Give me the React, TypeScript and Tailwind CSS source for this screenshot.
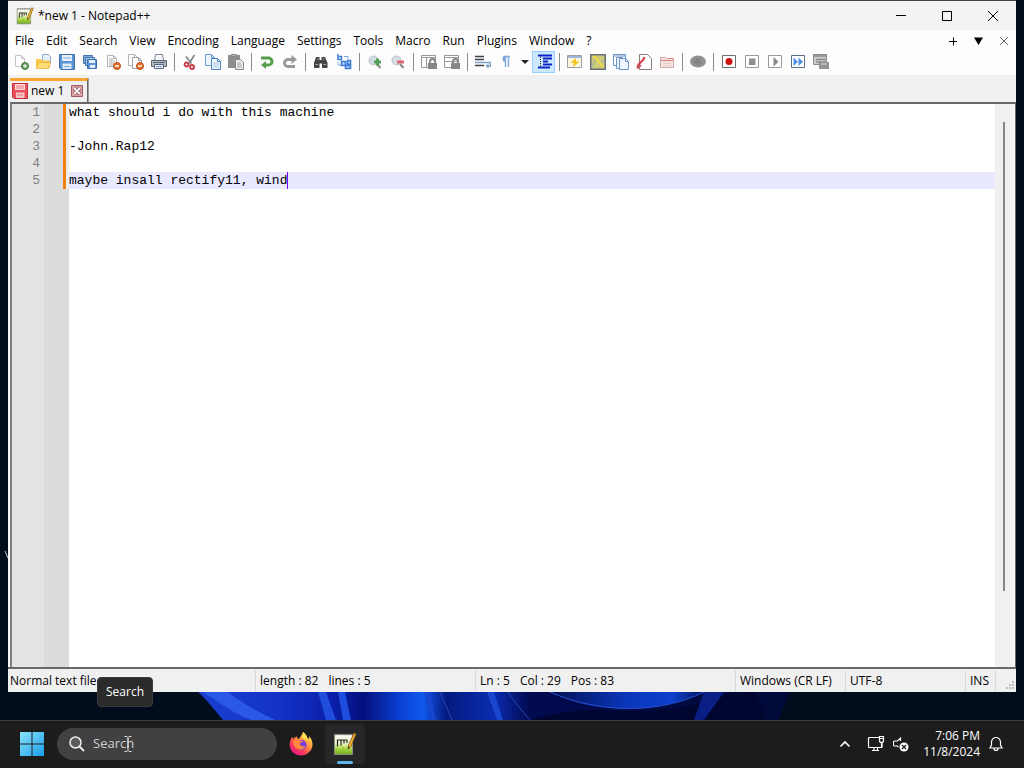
import { useState } from "react";
import type { ReactNode } from "react";
import clsx from "clsx";

const MENUS = [
  "File", "Edit", "Search", "View", "Encoding", "Language", "Settings",
  "Tools", "Macro", "Run", "Plugins", "Window", "?",
];

const INITIAL_TEXT = `what should i do with this machine

-John.Rap12

maybe insall rectify11, wind`;

function Icon({ children }: { children: ReactNode }) {
  return (
    <svg viewBox="0 0 16 16" className="h-4 w-4 shrink-0" fill="none" aria-hidden="true">
      {children}
    </svg>
  );
}

function Page({ x = 0, y = 0, color = "#a8a8a8", fill = "#fff" }) {
  return (
    <path
      d={`M${x + 0.5} ${y + 0.5}h6l3 3v8h-9z M${x + 6.5} ${y + 0.5}v3h3`}
      stroke={color}
      fill={fill}
    />
  );
}

function CloseBadge() {
  return (
    <>
      <circle cx="12" cy="12" r="3.5" fill="#e2702c" stroke="#b9501a" />
      <path d="M10 12h4" stroke="#fff" strokeWidth="1.4" />
    </>
  );
}

function Lens({ color, plus }: { color: string; plus?: boolean }) {
  return (
    <Icon>
      <path d="M10 10l3.500 4" stroke="#888" strokeWidth="2" />
      <circle cx="6.5" cy="6.5" r="4.500" fill="#d3dde2" stroke="#b4c2ca" />
      <path d={plus ? "M7 8h7M10.500 4.500v7" : "M7 8h7"} stroke={color} strokeWidth="3" />
    </Icon>
  );
}

function LockedPane({ split }: { split?: boolean }) {
  return (
    <Icon>
      <path d="M.5 1.500h14v12H.5zM.5 3.500h14" stroke="#999" />
      {split ? <path d="M5.500 4v9" stroke="#999" /> : <path d="M1 7.500h12" stroke="#999" />}
      <path d="M7 9h9v6H7z" fill="#868686" />
      <path d="M9 9V7.500a2.500 2.500 0 0 1 5 0V9" stroke="#868686" strokeWidth="1.800" />
    </Icon>
  );
}

type Tool = { label: string; icon: ReactNode; active?: boolean; drop?: boolean };

const TOOL_GROUPS: Tool[][] = [
  [
    {
      label: "New",
      icon: (
        <Icon>
          <Page x={2} y={1} color="#c4c4c4" />
          <circle cx="12" cy="12" r="3.500" fill="#6d9b5a" stroke="#487a3a" />
          <path d="M10 12h4M12 10v4" stroke="#fff" />
        </Icon>
      ),
    },
    {
      label: "Open",
      icon: (
        <Icon>
          <path d="M6.500.5h6l2 2v7h-8z" fill="#e4effa" stroke="#88a9cc" />
          <path d="M0 5h5l1 1.500h8V14H0z" fill="#f7c84a" />
          <path d="M.5 14.500l2-6h12l-2 6z" fill="#fddc77" stroke="#e5a92c" strokeWidth=".7" />
        </Icon>
      ),
    },
    {
      label: "Save",
      icon: (
        <Icon>
          <path d="M.5.5h15v15H2L.5 14z" fill="#5c94d3" stroke="#3a70ae" />
          <path d="M3 1h10v6H3z" fill="#e8f1fb" />
          <path d="M3.500 9.500h9V15h-9z" fill="#dfeafb" />
          <path d="M4 4h8M5 12.500h6" stroke="#7faadc" />
        </Icon>
      ),
    },
    {
      label: "Save All",
      icon: (
        <Icon>
          <path d="M1.500 1.500h9v8h-9z" fill="#7fabe0" stroke="#4676b0" />
          <path d="M3.500 3.500h9v8h-9z" fill="#a9c8ec" stroke="#4676b0" />
          <path d="M5.500 5.500h9v9h-9z" fill="#5c94d3" stroke="#3a70ae" />
          <path d="M7 6h6v3H7zM8 11h5v3H8z" fill="#e8f1fb" />
        </Icon>
      ),
    },
    {
      label: "Close",
      icon: (
        <Icon>
          <Page x={2} y={1} color="#b4b4b4" />
          <path d="M4 5h4M4 7h6M4 9h5M4 11h4" stroke="#aaa" />
          <CloseBadge />
        </Icon>
      ),
    },
    {
      label: "Close All",
      icon: (
        <Icon>
          <Page x={0} y={0} color="#b4b4b4" />
          <Page x={4} y={3} color="#a0a0a0" />
          <CloseBadge />
        </Icon>
      ),
    },
    {
      label: "Print",
      icon: (
        <Icon>
          <path d="M4.500.5h7l1 6h-9z" fill="#f3f7fd" stroke="#7a8797" />
          <path d="M.5 6.500h15v6H.5z" fill="#b4bbc4" stroke="#59636f" />
          <path d="M3.500 10.500h9v4h-9z" fill="#e8f1fb" stroke="#59636f" />
          <path d="M5 12.500h6" stroke="#6ea0d8" />
          <path d="M2 8.500h12" stroke="#5a6470" />
        </Icon>
      ),
    },
  ],
  [
    {
      label: "Cut",
      icon: (
        <Icon>
          <path d="M7 9.500L12.500 1M9.500 9.500L4 2.500" stroke="#7e8287" strokeWidth="1.600" />
          <circle cx="4.500" cy="10.500" r="2" stroke="#c63946" strokeWidth="1.800" />
          <circle cx="10" cy="13" r="2" stroke="#c63946" strokeWidth="1.800" />
        </Icon>
      ),
    },
    {
      label: "Copy",
      icon: (
        <Icon>
          <Page x={0} y={0} color="#6b9bd1" fill="#eff6ff" />
          <Page x={6} y={4} color="#4d84c4" fill="#eff6ff" />
          <path d="M8 9h6M8 11h6M8 13h6" stroke="#a9c7e8" />
        </Icon>
      ),
    },
    {
      label: "Paste",
      icon: (
        <Icon>
          <path d="M0 1h12v13H0z" fill="#8e8e8e" />
          <path d="M3.500.5h5v2h-5z" fill="#b5b5b5" stroke="#888" />
          <path d="M7.500 5.500h5l3 3v7h-8z" fill="#eee" stroke="#888" />
          <path d="M9 9h4M9 11h5M9 13h5" stroke="#aaa" />
        </Icon>
      ),
    },
  ],
  [
    {
      label: "Undo",
      icon: (
        <Icon>
          <path d="M2 4h7.500a3.500 3.500 0 0 1 0 7H6" stroke="#56a04c" strokeWidth="3" />
          <path d="M7 7v8l-5-4z" fill="#56a04c" />
        </Icon>
      ),
    },
    {
      label: "Redo",
      icon: (
        <Icon>
          <path d="M13 12.500H6a3.500 3.500 0 0 1 0-7h5" stroke="#999" strokeWidth="3" />
          <path d="M9.500 1v9l5.500-4.500z" fill="#999" />
        </Icon>
      ),
    },
  ],
  [
    {
      label: "Find",
      icon: (
        <Icon>
          <path d="M3 3h3.500v3h2V3H12l2.500 6v5H9V9.500H6.500V14H1V9z" fill="#444" />
          <path d="M2.500 10.500h2.500M10.500 10.500H13M4 5h1.500M10 5h1.500" stroke="#aaa" />
        </Icon>
      ),
    },
    {
      label: "Replace",
      icon: (
        <Icon>
          <path d="M2 0v6M2 5.500h3.500v-3H2" stroke="#3c7bd8" strokeWidth="1.500" />
          <path d="M5.500 7.500h4v4h-4zM11.500 6.500h3v4h-3zM9.500 11.500h5v3h-5z" fill="#b6d3f7" stroke="#3c7bd8" strokeWidth="1.600" />
          <path d="M2 8v3h3M8 2.500h4v3" stroke="#7ba8e4" />
        </Icon>
      ),
    },
  ],
  [
    { label: "Zoom In", icon: <Lens color="#58a05a" plus /> },
    { label: "Zoom Out", icon: <Lens color="#dc6a70" /> },
  ],
  [
    { label: "Synchronize Vertical Scrolling", icon: <LockedPane split /> },
    { label: "Synchronize Horizontal Scrolling", icon: <LockedPane /> },
  ],
  [
    {
      label: "Word wrap",
      icon: (
        <Icon>
          <path d="M0 2.500h9M0 5.500h9M0 11.500h9" stroke="#39414d" strokeWidth="1.300" />
          <path d="M0 8.500h15.500v3.500H12" stroke="#7d9fc9" strokeWidth="1.300" />
          <path d="M13.500 9.500v5l-3-2.500z" fill="#7d9fc9" />
        </Icon>
      ),
    },
    {
      label: "Show All Characters",
      drop: true,
      icon: (
        <Icon>
          <path d="M7.500 2v11M10.500 2v11M5 2.500h7" stroke="#7fa9dc" strokeWidth="1.400" />
          <path d="M7.500 2v6a3 3 0 0 1 0-6z" fill="#7fa9dc" />
        </Icon>
      ),
    },
    {
      label: "Show Indent Guide",
      active: true,
      icon: (
        <Icon>
          <path d="M2 1.500h14M7 4.500h9M7 7.500h5M7 10.500h9M2 13.500h12" stroke="#0c24c4" strokeWidth="2" />
          <path d="M4.500 3v10" stroke="#333" strokeDasharray="1 1" />
        </Icon>
      ),
    },
  ],
  [
    {
      label: "Define your language",
      icon: (
        <Icon>
          <path d="M.5 1.500h14v12H.5z" fill="#fbf6dd" stroke="#9a9fa8" />
          <path d="M1 3h13" stroke="#9db7d8" strokeWidth="2" />
          <path d="M9 4L3.500 9H7l-1 4 6.500-5.500H9z" fill="#f6c21c" />
        </Icon>
      ),
    },
    {
      label: "Document Map",
      icon: (
        <Icon>
          <path d="M.75.75h14.500v14.500H.75z" fill="#cfcc78" stroke="#65707b" strokeWidth="1.500" />
          <path d="M2 13l4-9 4 6 4-4" stroke="#9ab5a5" strokeWidth="1.200" />
          <path d="M4 2l9 11" stroke="#efdc48" strokeWidth="2" />
        </Icon>
      ),
    },
    {
      label: "Document List",
      icon: (
        <Icon>
          <path d="M.5.5h12v11H.5z" fill="#fff" stroke="#6c95c5" />
          <path d="M1 2h11" stroke="#6c95c5" />
          <Page x={3} y={3} color="#6c95c5" fill="#eff6ff" />
          <Page x={6} y={4} color="#6c95c5" fill="#eff6ff" />
        </Icon>
      ),
    },
    {
      label: "Function List",
      icon: (
        <Icon>
          <path d="M3.500.5h8l4 4v11h-12z" fill="#fff" stroke="#8c7a7a" />
          <path d="M1.500 14.500l1-4 5-5 1-2.500M2 11l3 1" stroke="#d5434f" strokeWidth="2.200" />
        </Icon>
      ),
    },
    {
      label: "Folder as Workspace",
      icon: (
        <Icon>
          <path d="M1.500 3.500h5l1 1h7v9h-13z" fill="#f6e4e1" stroke="#cfaaa6" />
          <path d="M2 6.500h12M9 4.500h5" stroke="#d8827f" />
          <path d="M4 9.500h8M4 11.500h8" stroke="#ecccc9" />
        </Icon>
      ),
    },
  ],
  [
    {
      label: "Monitoring",
      icon: (
        <Icon>
          <ellipse cx="8" cy="7.500" rx="8" ry="6" fill="#929292" />
          <circle cx="8" cy="7.500" r="3.500" fill="#848484" />
        </Icon>
      ),
    },
  ],
  [
    {
      label: "Start Recording",
      icon: (
        <Icon>
          <path d="M1.500 1.500h13v12h-13z" fill="#fff" stroke="#6e6e6e" />
          <circle cx="8" cy="7.500" r="3.500" fill="#cc1111" />
        </Icon>
      ),
    },
    {
      label: "Stop Recording",
      icon: (
        <Icon>
          <path d="M1.500 1.500h13v12h-13z" fill="#fff" stroke="#999" />
          <path d="M5 4.500h6.500V11H5z" fill="#8e8e8e" />
        </Icon>
      ),
    },
    {
      label: "Playback",
      icon: (
        <Icon>
          <path d="M1.500 1.500h13v12h-13z" fill="#fff" stroke="#999" />
          <path d="M6.500 3v9.500l5-4.750z" fill="#8a8a8a" />
        </Icon>
      ),
    },
    {
      label: "Run a Macro Multiple Times",
      icon: (
        <Icon>
          <path d="M1.500 1.500h13v12h-13z" fill="#fff" stroke="#5d6f88" />
          <path d="M3.500 3.500v8.500L8 7.750zM8.500 3.500v8.500L13 7.750z" fill="#4b8fe3" />
        </Icon>
      ),
    },
    {
      label: "Save Current Recorded Macro",
      icon: (
        <Icon>
          <path d="M.5.5h13v10H.5z" fill="#ccc" stroke="#8c8c8c" />
          <path d="M1 2h12M3 5.500h10M3 8h10" stroke="#8c8c8c" strokeWidth="1.500" />
          <path d="M6 8h10v7H6z" fill="#929292" />
          <path d="M8 10h6" stroke="#ddd" />
        </Icon>
      ),
    },
  ],
];

function NotepadLogo({ className }: { className: string }) {
  return (
    <svg viewBox="0 0 24 24" className={className} fill="none" aria-hidden="true">
      <defs>
        <linearGradient id="leaf" x1="0" y1="0" x2="0" y2="1">
          <stop offset="0" stopColor="#fbfdf5" />
          <stop offset="0.450" stopColor="#eaf4c8" />
          <stop offset="0.700" stopColor="#b2da4a" />
          <stop offset="1" stopColor="#6aa81c" />
        </linearGradient>
      </defs>
      <path d="M1.500 2.500h18v20h-18z" fill="url(#leaf)" stroke="#8a917f" />
      <path d="M2 2.500h17" stroke="#777" strokeWidth="1.500" strokeDasharray="1.500 1.500" />
      <path d="M4.500 7.500v7M8 7.500v6M11 8.500v3M14 8.500v2.500M4.500 8h10" stroke="#222" strokeWidth="1.200" />
      <path d="M4 21v-5M7 21v-4M10 21v-6M13 21v-4M16 21v-5" stroke="#8cc22e" />
      <path d="M23 2l-2-1-5.500 12-.5 4 3-2.500z" fill="#f0b429" stroke="#7d4f24" strokeWidth=".8" />
      <path d="M15 17l.5-2.500 1.500 1z" fill="#222" />
    </svg>
  );
}

function TitleBar() {
  return (
    <header className="flex h-[29px] shrink-0 items-center bg-[#f3f3f3] pl-2">
      <NotepadLogo className="h-[18px] w-[18px]" />
      <h1 className="ml-1 flex-1 text-[12px] text-black">*new 1 - Notepad++</h1>
      <button aria-label="Minimize" className="grid h-full w-[46px] place-items-center">
        <svg viewBox="0 0 10 10" className="h-2.5 w-2.5"><path d="M0 4.500h10" stroke="#000" /></svg>
      </button>
      <button aria-label="Maximize" className="grid h-full w-[46px] place-items-center">
        <svg viewBox="0 0 10 10" className="h-2.5 w-2.5" fill="none"><path d="M.5.5h9v9h-9z" stroke="#000" /></svg>
      </button>
      <button aria-label="Close" className="grid h-full w-[46px] place-items-center">
        <svg viewBox="0 0 10 10" className="h-2.5 w-2.5"><path d="M0 0l10 10M10 0L0 10" stroke="#000" /></svg>
      </button>
    </header>
  );
}

function MenuBar() {
  return (
    <nav className="flex h-[21px] shrink-0 items-center justify-between bg-[#fdfdfd] pl-px">
      <div className="flex h-full items-end">
        {MENUS.map((menu) => (
          <button key={menu} className="px-1.5 text-[12px] leading-5 text-black">
            {menu}
          </button>
        ))}
      </div>
      <div className="flex h-full items-center gap-4 pr-[7px]">
        <button aria-label="New tab">
          <svg viewBox="0 0 10 10" className="h-2.5 w-2.5"><path d="M2 5.500h8M6.500 1.500v8" stroke="#000" /></svg>
        </button>
        <button aria-label="Tab list">
          <svg viewBox="0 0 10 10" className="h-2.5 w-2.5"><path d="M1 1.500h9L5.500 9z" fill="#000" /></svg>
        </button>
        <button aria-label="Close tab">
          <svg viewBox="0 0 10 10" className="h-2.5 w-2.5"><path d="M1 1l8 8M9 1L1 9" stroke="#666" /></svg>
        </button>
      </div>
    </nav>
  );
}

function Toolbar() {
  return (
    <div role="toolbar" className="flex h-6 shrink-0 items-start bg-[#fdfdfd] pl-px">
      {TOOL_GROUPS.map((group, i) => (
        <div key={i} className="flex items-center">
          {i > 0 && (
            <div className="grid w-2 place-items-center">
              <div className="h-[18px] w-px bg-[#8c8c8c]" />
            </div>
          )}
          {group.map((tool) => (
            <div key={tool.label} className="flex">
              <button
                aria-label={tool.label}
                className={clsx(
                  "grid h-[22px] w-[23px] place-items-center border",
                  tool.active ? "border-[#99ccff] bg-[#cce8ff]" : "border-transparent",
                )}
              >
                {tool.icon}
              </button>
              {tool.drop && (
                <button aria-label="Symbol options" className="grid w-[15px] place-items-center">
                  <svg viewBox="0 0 8 4" className="h-1 w-2"><path d="M0 0h8L4 4z" fill="#222" /></svg>
                </button>
              )}
            </div>
          ))}
        </div>
      ))}
    </div>
  );
}

function TabBar() {
  return (
    <div className="flex h-[27px] shrink-0 items-end bg-[#f0f0f0] pl-0.5">
      <div className="flex h-6 items-center border-t-[3px] border-r border-t-[#faa634] border-r-[#696969] pr-1 pb-0.5 pl-0.5 shadow-[1px_0_0_#a0a0a0]">
        <svg viewBox="0 0 16 16" className="h-4 w-4" fill="none" aria-hidden="true">
          <path d="M.5.5h15v15H2L.5 14z" fill="#e9505a" stroke="#c02f3a" />
          <path d="M3 1h10v6H3z" fill="#fbdcdc" />
          <path d="M4 9.500h8.500V15H4z" fill="#f8c6c8" />
          <path d="M4 3h8M4 5h8M5 12h6" stroke="#e57880" />
        </svg>
        <button className="ml-[3px] text-[12px] text-black">new 1</button>
        <button aria-label="Close new 1" className="ml-[7px]">
          <svg viewBox="0 0 12 12" className="h-3 w-3" fill="none">
            <path d="M.5.5h11v11H.5z" fill="#d9a0a2" stroke="#9b5f66" />
            <path d="M3 3l6 6M9 3L3 9" stroke="#8f444d" strokeWidth="3.200" />
            <path d="M3 3l6 6M9 3L3 9" stroke="#fff" strokeWidth="1.800" />
          </svg>
        </button>
      </div>
    </div>
  );
}

function Editor() {
  const [text, setText] = useState(INITIAL_TEXT);
  const lines = text.split("\n");
  const last = lines.length - 1;

  return (
    <div className="ml-0.5 flex min-h-0 flex-1 border-t-2 border-l-2 border-t-[#696969] border-l-[#808080] font-['Liberation_Mono',monospace] text-[13px] leading-[17px]">
      <ol className="w-8 shrink-0 bg-[#e4e4e4] pr-1 text-right leading-[17px] text-[#808080]">
        {lines.map((_, i) => (
          <li key={i}>{i + 1}</li>
        ))}
      </ol>
      <div className="w-[19px] shrink-0 bg-[#dcdcdc]" />
      <div className="w-1.5 shrink-0 bg-[#dcdcdc]">
        {lines.map((_, i) => (
          <div key={i} className="h-[17px] border-l-[3px] border-[#f08010] bg-[#ececec]" />
        ))}
      </div>
      <div className="relative min-w-0 flex-1 bg-white">
        <div className="absolute inset-x-0 h-[17px] bg-[#e8e8ff]" style={{ top: last * 17 }}>
          <div
            className="absolute inset-y-0 w-px bg-[#8000ff]"
            style={{ left: `${lines[last].length}ch` }}
          />
        </div>
        <textarea
          aria-label="new 1"
          spellCheck={false}
          value={text}
          onChange={(e) => setText(e.target.value)}
          className="relative block h-full w-full resize-none bg-transparent text-black outline-none"
        />
      </div>
      <div className="flex w-[17px] shrink-0 justify-center bg-[#f0f0f0] pt-[18px]">
        <div className="h-[86%] w-0.5 bg-[#858585]" />
      </div>
      <div className="w-1 shrink-0 border-r border-[#696969] bg-[#f5f5f5]" />
    </div>
  );
}

function StatusBar() {
  const cell = "flex items-center gap-2.5 border-r border-[#dadada] pl-1 whitespace-nowrap";
  return (
    <footer className="flex h-[25px] shrink-0 border-t-2 border-[#696969] bg-[#f0f0f0] pt-px text-[12px] text-black">
      <div className="flex flex-1 items-center border-r border-[#dadada] pl-0.5">Normal text file</div>
      <div className={clsx(cell, "w-[220px]")}>
        <span>length : 82</span>
        <span>lines : 5</span>
      </div>
      <div className={clsx(cell, "w-[260px]")}>
        <span>Ln : 5</span>
        <span>Col : 29</span>
        <span>Pos : 83</span>
      </div>
      <div className={clsx(cell, "w-[110px]")}>Windows (CR LF)</div>
      <div className={clsx(cell, "w-[120px]")}>UTF-8</div>
      <div className={clsx(cell, "w-[30px]")}>INS</div>
      <div className="flex w-5 items-end justify-end">
        <svg viewBox="0 0 12 12" className="h-3 w-3" aria-hidden="true">
          <path d="M8 1h2v2H8zM5 4h2v2H5zM8 4h2v2H8zM2 7h2v2H2zM5 7h2v2H5zM8 7h2v2H8z" fill="#bfbfbf" />
        </svg>
      </div>
    </footer>
  );
}

function Wallpaper() {
  return (
    <svg
      viewBox="0 0 1024 28"
      preserveAspectRatio="none"
      className="absolute inset-x-0 bottom-0 h-7 w-full"
      aria-hidden="true"
    >
      <defs>
        <linearGradient id="petals" x1="0" x2="1" y1="0" y2="0">
          <stop offset="0" stopColor="#1a3fd0" />
          <stop offset="0.130" stopColor="#1433c8" />
          <stop offset="0.230" stopColor="#0a1fa8" />
          <stop offset="0.280" stopColor="#04107c" />
          <stop offset="0.340" stopColor="#0b3fd2" />
          <stop offset="0.380" stopColor="#1059ee" />
          <stop offset="0.420" stopColor="#041a80" />
          <stop offset="0.500" stopColor="#0a2cb0" />
          <stop offset="0.560" stopColor="#020a50" />
          <stop offset="1" stopColor="#010a38" />
        </linearGradient>
        <linearGradient id="sweep" x1="0" x2="1" y1="0" y2="0">
          <stop offset="0" stopColor="#031050" />
          <stop offset="0.500" stopColor="#0a36bb" />
          <stop offset="0.800" stopColor="#0d3fcb" />
          <stop offset="1" stopColor="#02115a" />
        </linearGradient>
      </defs>
      <path d="M0 0h1024v28H0z" fill="#010d1c" />
      <path d="M198 0h592l-12 28H223C213 16 207 8 198 0z" fill="url(#petals)" />
      <path d="M203 0c18 12 32 22 48 28h24C258 20 240 10 228 0z" fill="#2b58e6" />
      <path d="M318 0l8 28h10L326 0zM338 0l5 28h8L345 0z" fill="#1f4ddc" />
      <path d="M424 0l8 28h4L430 0zM487 0l10 28h6L494 0z" fill="#1846cf" />
      <path d="M440 0l12 28M508 0c8 12 15 20 22 28" stroke="#2946b4" fill="none" />
      <path d="M530 28c20-6 40-10 70-10 60 4 100-4 130-16l25-2 12 28z" fill="#010630" />
      <path d="M550 0c40 22 110 22 154 0z" fill="url(#sweep)" />
      <path d="M550 0c50 22 110 22 154 0" stroke="#2450d2" fill="none" />
      <path d="M704 0h20l-20 28h-10z" fill="#0a1f86" />
    </svg>
  );
}

function Firefox() {
  return (
    <svg viewBox="0 0 24 24" className="h-6 w-6" aria-hidden="true">
      <defs>
        <linearGradient id="fox" x1="0.900" x2="0.200" y1="0.050" y2="0.950">
          <stop offset="0" stopColor="#fff44f" />
          <stop offset="0.400" stopColor="#ff9640" />
          <stop offset="0.700" stopColor="#ff4055" />
          <stop offset="1" stopColor="#e31587" />
        </linearGradient>
      </defs>
      <path
        d="M14 0c3 2 4 4 4.500 6C20 7.500 20.500 5.500 20 4c2.500 2.500 3.800 6 3.500 9.500C22.800 19 18 23.500 12 23.500S.8 19 .7 13C.7 10 1.500 6.500 3.500 4.500c0 1 .2 2 .5 2.500C5 6 6 5 8 4.500c0 1 .5 2 2 2.500C11 5 13 3 14 0z"
        fill="url(#fox)"
      />
      <circle cx="12.500" cy="13" r="5" fill="#7a3fe0" />
      <path d="M4 9c2-2 4-2 6-1 1 .5 2 1 4 1-.5 1.500-3 1.500-3.500 3 1 2 4 3 6 2-1 3-4.500 4-7.500 3S4 13 4 9z" fill="#ff8a3a" />
      <path d="M14 0c2.500 2.500 4.500 5 4.500 10-1.500-2.500-3-4-6-4.500.8-1 1.500-3.500 1.500-5.500z" fill="#ffe14d" />
    </svg>
  );
}

function Taskbar() {
  return (
    <div className="flex h-12 shrink-0 items-center border-t border-[#3a3d40] bg-[#1c1c1c] pr-5 pb-0.5 text-white">
      <button aria-label="Start" className="ml-5">
        <svg viewBox="0 0 24 24" className="h-6 w-6" aria-hidden="true">
          <defs>
            <linearGradient id="win" x1="0" y1="0" x2="1" y2="1">
              <stop offset="0" stopColor="#8be4fb" />
              <stop offset="1" stopColor="#1b9cea" />
            </linearGradient>
          </defs>
          <path d="M0 0h11.500v11.500H0zM12.500 0H24v11.500H12.500zM0 12.500h11.500V24H0zM12.500 12.500H24V24H12.500z" fill="url(#win)" />
        </svg>
      </button>
      <div className="relative ml-[13px] flex h-8 w-[220px] items-center rounded-full bg-[#414141] px-3">
        <svg viewBox="0 0 16 16" className="h-4 w-4 shrink-0" fill="none" aria-hidden="true">
          <circle cx="6.500" cy="6.500" r="5.500" fill="#5c5c5c" stroke="#eee" strokeWidth="1.500" />
          <path d="M10.500 10.500L15 15" stroke="#eee" strokeWidth="1.800" />
        </svg>
        <input
          type="text"
          aria-label="Search"
          placeholder="Search"
          className="ml-2 min-w-0 flex-1 bg-transparent text-[13px] text-white placeholder-[#cfcfcf] outline-none"
        />
        <div role="tooltip" className="absolute bottom-full left-10 mb-[21px] rounded border border-[#3a3a3a] bg-[#2b2b2b] px-2 py-[5px] text-[12px] leading-[18px]">
          Search
        </div>
        <svg viewBox="0 0 8 16" className="absolute left-[67px] h-4 w-2" fill="none" aria-hidden="true">
          <path d="M.5.5H3l1 1 1-1h2.500M4 1.500v13M.5 15.500H3l1-1 1 1h2.500M3 10.500h2" stroke="#ddd" />
        </svg>
      </div>
      <button aria-label="Firefox" className="ml-3">
        <Firefox />
      </button>
      <button
        aria-label="Notepad++"
        className="relative ml-3 grid h-10 w-10 place-items-center rounded bg-[#272727]"
      >
        <NotepadLogo className="h-6 w-6" />
        <span className="absolute bottom-0 h-[3px] w-4 rounded-full bg-[#5fb4f0]" />
      </button>
      <div className="ml-auto flex items-center">
        <button aria-label="Show hidden icons" className="mr-4">
          <svg viewBox="0 0 12 12" className="h-3 w-3" fill="none"><path d="M1.500 8.500L6 4l4.500 4.500" stroke="#fff" strokeWidth="1.600" /></svg>
        </button>
        <button aria-label="Network" className="mr-2">
          <svg viewBox="0 0 18 18" className="h-[18px] w-[18px]" fill="none">
            <path d="M12 2.500H2.500a1 1 0 0 0-1 1v8a1 1 0 0 0 1 1H15V8M5 15.500h7M7 13v2.500M10.500 13v2.500" stroke="#fff" strokeWidth="1.200" />
            <path d="M12.500 1.500h4v4a2 2 0 0 1-4 0zM12.500 3.500h4M14.500 7.500V12" stroke="#fff" strokeWidth="1.200" />
          </svg>
        </button>
        <button aria-label="Volume" className="mr-3.5">
          <svg viewBox="0 0 16 16" className="h-4 w-4" fill="none">
            <path d="M7.500 5V2L4.500 5h-3a1 1 0 0 0-1 1v3a1 1 0 0 0 1 1h3l1 1" stroke="#fff" strokeWidth="1.100" />
            <circle cx="11" cy="11" r="4.500" fill="#fff" />
            <path d="M9 9l4 4M13 9l-4 4" stroke="#1c1c1c" strokeWidth="1.200" />
          </svg>
        </button>
        <button className="mr-2 text-right text-[12px] leading-4">
          <span className="block">7:06 PM</span>
          <span className="block">11/8/2024</span>
        </button>
        <button aria-label="Notifications">
          <svg viewBox="0 0 16 16" className="h-4 w-4" fill="none">
            <path d="M8 1.500a4.500 4.500 0 0 0-4.500 4.500v3L2 12h12l-1.500-3V6A4.500 4.500 0 0 0 8 1.500zM6 12.500a2 2 0 0 0 4 0" stroke="#fff" strokeWidth="1.200" />
          </svg>
        </button>
      </div>
    </div>
  );
}

export default function App() {
  return (
    <div className="flex h-screen flex-col overflow-hidden bg-[#010d1c] font-['Open_Sans','Noto_Sans',sans-serif]">
      <main className="relative flex min-h-0 flex-1 flex-col px-2 pb-7">
        <Wallpaper />
        {/* desktop shortcut label peeking out from behind the window */}
        <svg viewBox="0 0 8 8" className="absolute top-[551px] left-1 h-2 w-2" aria-hidden="true">
          <path d="M1 0l3 7 3-7" stroke="#c8ccd0" fill="none" />
        </svg>
        <section className="relative flex min-h-0 flex-1 flex-col border-t border-[#444] bg-[#f5f5f5]">
          <TitleBar />
          <MenuBar />
          <Toolbar />
          <TabBar />
          <Editor />
          <StatusBar />
        </section>
      </main>
      <Taskbar />
    </div>
  );
}
